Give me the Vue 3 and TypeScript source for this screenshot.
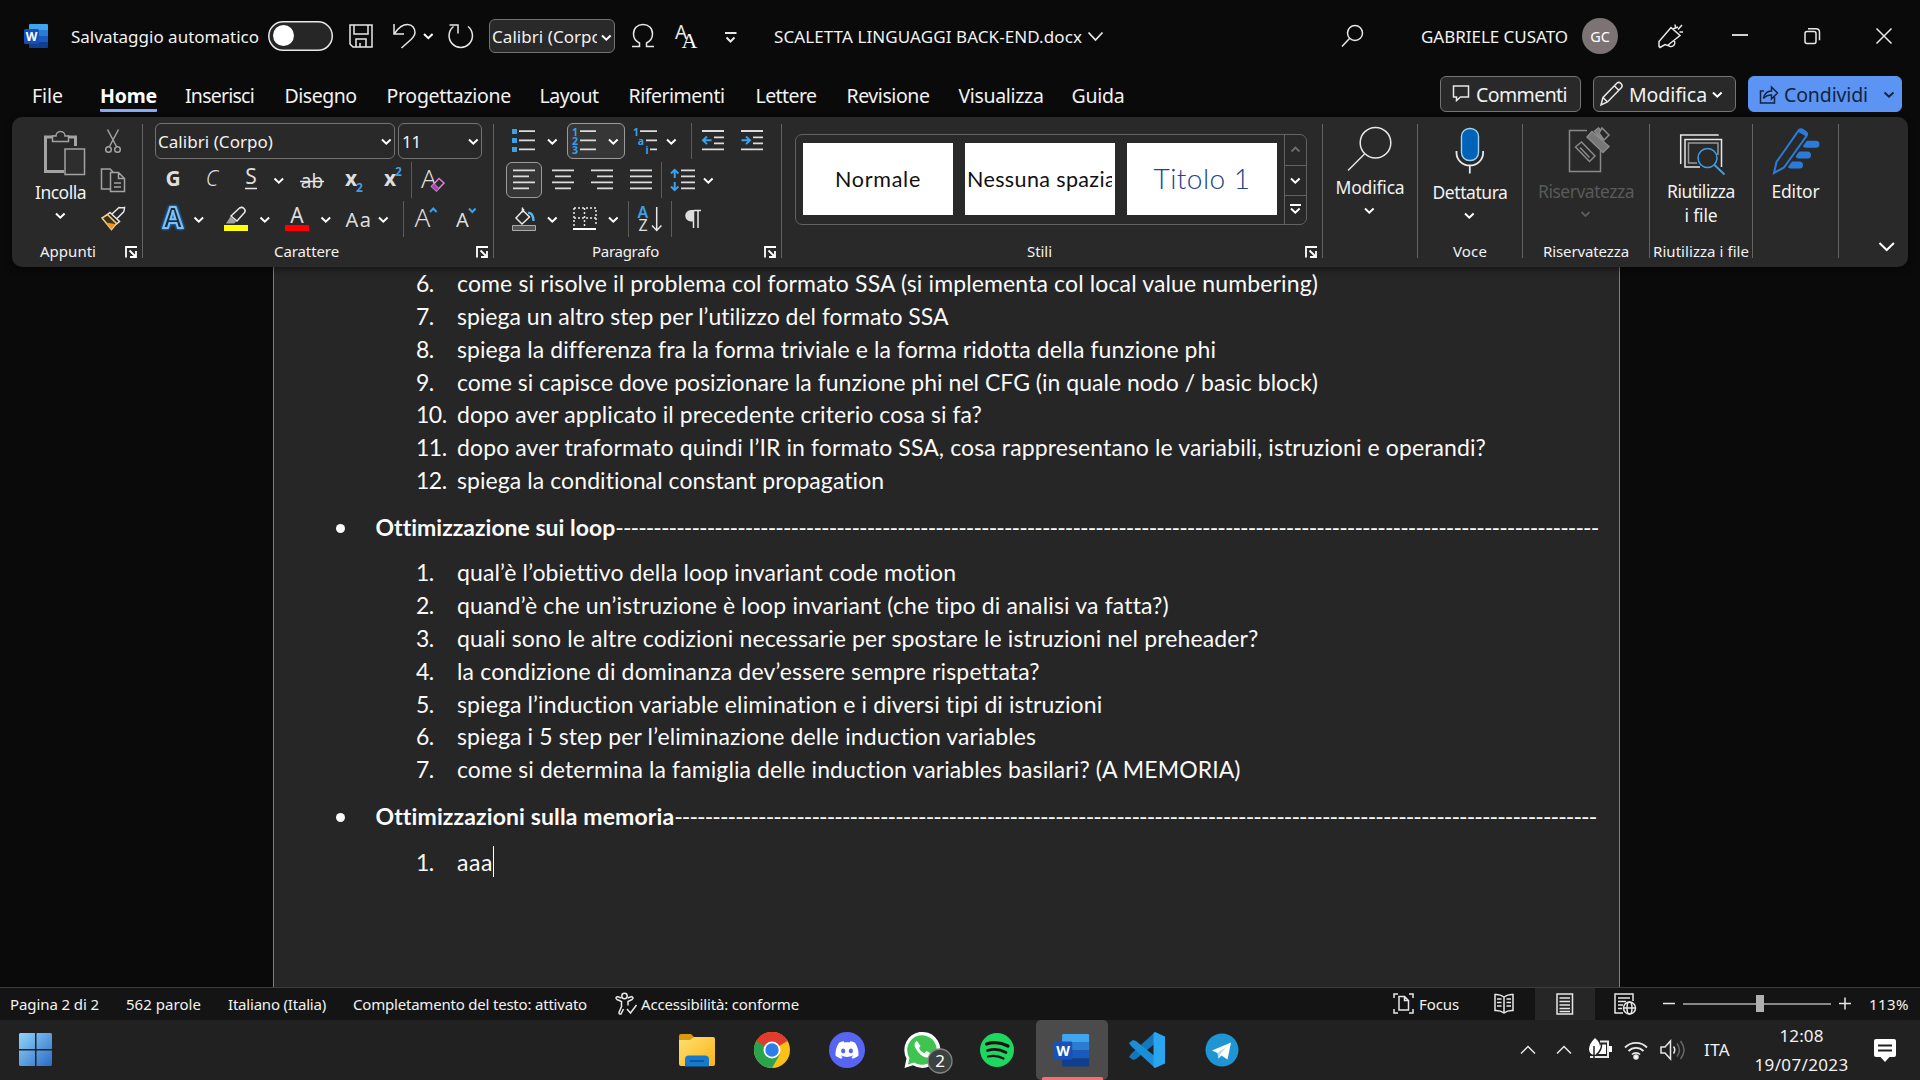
<script setup lang="ts">
import { h, type FunctionalComponent, type Directive } from 'vue'

interface Tab { label: string; width: number; cell: number; active?: boolean }
interface Line { n: number; text: string; width: number }

// Svg tile whose box is given as "x y width height" in window coordinates.
const Ic: FunctionalComponent<{ b: string }> = (props, { slots }) => {
  const [, , w, ht] = props.b.split(' ')
  return h('svg', { class: 'ic', width: w, height: ht, viewBox: props.b }, slots.default?.())
}
Ic.props = ['b']

const Chev: FunctionalComponent<{ x: number | string; y: number | string }> = (props) =>
  h('path', { class: 'cv', d: `M${props.x} ${props.y}l4.3 4.2 4.3-4.2` })
Chev.props = ['x', 'y']

// Tracks the text so that its run takes the given width.
const vFit: Directive<HTMLElement, number> = {
  mounted(el, binding) {
    const count = (el.textContent ?? '').length
    const natural = el.getBoundingClientRect().width
    el.style.letterSpacing = `${(binding.value - natural) / count}px`
  },
}

const tabs: Tab[] = [
  { label: 'File', width: 31, cell: 68 },
  { label: 'Home', width: 57, cell: 85, active: true },
  { label: 'Inserisci', width: 69, cell: 99.5 },
  { label: 'Disegno', width: 72, cell: 102 },
  { label: 'Progettazione', width: 124.5, cell: 153 },
  { label: 'Layout', width: 59, cell: 89 },
  { label: 'Riferimenti', width: 96, cell: 127 },
  { label: 'Lettere', width: 61, cell: 91 },
  { label: 'Revisione', width: 83, cell: 112 },
  { label: 'Visualizza', width: 85, cell: 113 },
  { label: 'Guida', width: 53, cell: 60 },
]

const first: Line[] = [
  { n: 6, text: 'come si risolve il problema col formato SSA (si implementa col local value numbering)', width: 861 },
  { n: 7, text: 'spiega un altro step per l’utilizzo del formato SSA', width: 492 },
  { n: 8, text: 'spiega la differenza fra la forma triviale e la forma ridotta della funzione phi', width: 757.5 },
  { n: 9, text: 'come si capisce dove posizionare la funzione phi nel CFG (in quale nodo / basic block)', width: 861 },
  { n: 10, text: 'dopo aver applicato il precedente criterio cosa si fa?', width: 525 },
  { n: 11, text: 'dopo aver traformato quindi l’IR in formato SSA, cosa rappresentano le variabili, istruzioni e operandi?', width: 1029 },
  { n: 12, text: 'spiega la conditional constant propagation', width: 428 },
]
const second: Line[] = [
  { n: 1, text: 'qual’è l’obiettivo della loop invariant code motion', width: 499 },
  { n: 2, text: 'quand’è che un’istruzione è loop invariant (che tipo di analisi va fatta?)', width: 711.5 },
  { n: 3, text: 'quali sono le altre codizioni necessarie per spostare le istruzioni nel preheader?', width: 801.5 },
  { n: 4, text: 'la condizione di dominanza dev’essere sempre rispettata?', width: 582 },
  { n: 5, text: 'spiega l’induction variable elimination e i diversi tipi di istruzioni', width: 646.5 },
  { n: 6, text: 'spiega i 5 step per l’eliminazione delle induction variables', width: 579.5 },
  { n: 7, text: 'come si determina la famiglia delle induction variables basilari? (A MEMORIA)', width: 784 },
]
const dashes = (n: number): string => '-'.repeat(n)
</script>

<template>
  <div class="app">
    <header class="title">
      <Ic b="0 0 71 72">
        <g transform="translate(24 24)">
          <path d="M5 1q0-1 1-1h17q1 0 1 1v5H5z" fill="#41a5ee" stroke="none" />
          <path d="M5 6h19v6H5z" fill="#2b7cd3" stroke="none" />
          <path d="M5 12h19v6H5z" fill="#185abd" stroke="none" />
          <path d="M5 18h19v5q0 1-1 1H6q-1 0-1-1z" fill="#103f91" stroke="none" />
          <rect x="0" y="5" width="15" height="15" rx="1.5" fill="#1450b8" stroke="none" />
          <text x="7.5" y="16.5" class="wl">W</text>
        </g>
      </Ic>
      <span v-fit="188">Salvataggio automatico</span>
      <Ic b="259 0 82 72">
        <rect x="268.8" y="21.8" width="63.5" height="28.5" rx="14.2" fill="#262626" />
        <circle cx="283.5" cy="35.5" r="10.5" fill="#fff" stroke="none" />
      </Ic>
      <Ic b="341 0 40 72"><path d="M350 25h22v22h-19l-3-3zM354 25v9h14v-9M356 47v-8h10v8M360 47v-4" /></Ic>
      <Ic b="381 0 60 72">
        <path d="M394 24v10h10M394.500 33.500c4-6 8-9 13-9 5 0 7.500 4 7.500 8 0 3-2 5-4 7L401.500 48" />
        <Chev x="424" y="34" />
      </Ic>
      <Ic b="441 0 48 72"><path d="M453.500 26.500a11.700 11.700 0 1 0 14.500 0M449.500 25h8.500v8.500" /></Ic>
      <div class="combo qfont"><span class="qtext">Calibri (Corpo)</span><Ic b="597 18 16 33"><Chev x="602" y="33.500" /></Ic></div>
      <Ic b="615 0 49 72"><path d="M632 46.500h7.500v-3.500c-4-2-6-5-6-9 0-6 4-9.500 9.500-9.500s9.500 3.500 9.500 9.500c0 4-2 7-6 9v3.500h7.500" /></Ic>
      <Ic b="664 0 46 72">
        <text x="675" y="39" class="a1">A</text><text x="681.500" y="48" class="a2">A</text>
      </Ic>
      <Ic b="710 0 64 72"><path d="M725 33h11.500M726.500 37.500l4 4 4-4" stroke-width="2" /></Ic>
      <span v-fit="308">SCALETTA LINGUAGGI BACK-END.docx</span>
      <Ic b="1082 0 246 72"><path d="M1088.500 32.500l7 7.500 7-7.500" stroke-width="1.800" /></Ic>
      <Ic b="1328 0 93 72"><circle cx="1355" cy="33" r="7.500" /><path d="M1349.500 38.500l-7.500 8" /></Ic>
      <span v-fit="147">GABRIELE CUSATO</span>
      <Ic b="1568 0 64 72">
        <circle cx="1600" cy="36" r="18" fill="#7c7474" stroke="none" /><text x="1600" y="41.500" class="gc">GC</text>
      </Ic>
      <Ic b="1632 0 64 72"><path d="M1671 27.500l9 8-12.500 10-2.500-1-5 3-1-1v-5zM1668 45a3.500 3.500 0 0 0 6-4.500M1673 29l5-2M1675 24.500l.5 3M1682 25l-4 4.500M1679.500 32h3.500" /></Ic>
      <Ic b="1696 0 72 72"><path d="M1732 35h16" stroke-width="1.800" /></Ic>
      <Ic b="1768 0 80 72"><rect x="1805" y="31.500" width="11" height="12" rx="2" /><path d="M1808 28.800h8q3.500 0 3.500 3.500v8" /></Ic>
      <Ic b="1848 0 72 72"><path d="M1876.500 28.500l15 15M1891.500 28.500l-15 15" /></Ic>
    </header>

    <nav class="tabs">
      <div v-for="t in tabs" :key="t.label" :style="{ width: t.cell + 'px' }">
        <span v-fit="t.width" class="tab" :class="{ on: t.active }">{{ t.label }}</span>
      </div>
      <div class="acts">
        <div class="btn comm">
          <Ic b="1452 85 24 20"><path d="M1453.500 87h15v11h-8l-4 3.500v-3.500h-3z" /></Ic><span v-fit="91">Commenti</span>
        </div>
        <div class="btn modi">
          <Ic b="1599 80 29 28"><path d="M1600 105l2-7.500 14-14.500q2-1.500 4 .5t.5 4L1606.500 102zM1602 97.500l4.500 4.500M1613.500 86l4.500 4.500" /></Ic>
          <span v-fit="78">Modifica</span>
          <Ic b="1706 80 20 28"><Chev x="1712" y="92.500" /></Ic>
        </div>
        <div class="btn shar">
          <Ic b="1760 80 24 28"><path class="dk" d="M1764 91h-3.500v12h14v-6M1763.500 98.500c1-5 4-7.500 8-7.500v-4l6 6-6 6v-4c-3.500 0-6 1-8 3.500z" /></Ic>
          <span v-fit="84">Condividi</span>
          <Ic b="1868 80 33 28"><path class="dk" d="M1884.500 92.500l4.500 4.200 4.500-4.200" stroke-width="2" /></Ic>
        </div>
      </div>
    </nav>

    <section class="ribbon">
      <div class="grp appunti">
        <div class="body cols">
          <div class="col paste">
            <Ic b="28 123 60 57">
              <path class="gr" d="M56 137H45.500v34.500H64M67 137h8.500v9" stroke-width="3" />
              <path class="gr" d="M52.500 141.500v-5.500h3.500c0-2 1.500-4.500 4.500-4.500s4.500 2.500 4.500 4.500h3.500v5.500z" fill="#292929" />
              <rect class="gr" x="65" y="149" width="19.500" height="25.500" fill="#2e2e2e" />
            </Ic>
            <span v-fit="51" class="big">Incolla</span>
            <Ic b="28 206 60 18"><Chev x="56" y="213.500" /></Ic>
          </div>
          <div class="col">
            <Ic b="94 123 46 39"><g class="gr"><path d="M107.500 129.500l9 17M118.500 129.500l-9 17" /><circle cx="108.500" cy="149.500" r="2.800" /><circle cx="117.500" cy="149.500" r="2.800" /></g></Ic>
            <Ic b="94 162 46 39"><path class="gr" d="M110 189h-8.500v-20h8.500l3 3M110.500 172.500h8l6 6v13h-14zM118.500 172.500v6h6M114 183h7M114 187h7" /></Ic>
            <Ic b="94 201 46 36">
              <path d="M112 214l7-6.500q3 .500 5.500 0 0 3-1 4.500l-6.500 6.500" />
              <path d="M110 212.500l9.500 9-3 2.500-9.500-9z" />
              <path d="M107.500 214.500l-5.500 3.500 9.500 11.500 5-6z" fill="#3a3322" stroke="#f3d27c" /><path d="M106 222.500l9 1.500-3.500 5z" fill="#f0932b" stroke="none" />
            </Ic>
          </div>
        </div>
        <div class="foot"><span v-fit="56">Appunti</span><Ic b="0 0 12 12"><path class="ln" d="M1 11.500V1h11M4.500 4.500l6 6M11 5v6H5" /></Ic></div>
      </div>
      <i class="sep" />
      <div class="grp carattere">
        <div class="body rows">
          <div class="row">
            <div class="combo c1"><span v-fit="115">Calibri (Corpo)</span><Ic b="374 124 20 34"><Chev x="382" y="139.500" /></Ic></div>
            <div class="combo c2"><span v-fit="19">11</span><Ic b="460 124 21 34"><Chev x="469" y="139.500" /></Ic></div>
          </div>
          <div class="row">
            <Ic b="155 162 36 36"><text x="173" y="185.500" class="l b">G</text></Ic>
            <Ic b="191 162 40 36"><text x="212" y="185.500" class="l i">C</text></Ic>
            <Ic b="231 162 58 36"><text x="251" y="184" class="l">S</text><path d="M245 188.500h12" /><Chev x="274.500" y="178.500" /></Ic>
            <Ic b="289 162 43 36"><text x="312" y="188" class="l s">ab</text><path d="M300 181.500h24" /></Ic>
            <Ic b="332 162 40 36"><text x="351" y="185.500" class="l b">x</text><text x="359.500" y="192" class="l n">2</text></Ic>
            <Ic b="372 162 39 36"><text x="390" y="185.500" class="l b">x</text><text x="398.500" y="176" class="l n">2</text></Ic>
            <i class="vs" />
            <Ic b="412 162 60 36"><text x="429" y="187.500" class="l big2">A</text><path d="M431.500 186.500l7.500-8 5 4.500-7.500 8z" fill="#292929" stroke="#d982dc" /><path d="M434 184l4.500 4.500" stroke="#d982dc" /><path d="M431.500 186.500l2.500-2.500 4.500 4.500-2 2.500z" fill="#a445ab" stroke="none" /></Ic>
          </div>
          <div class="row">
            <Ic b="155 201 54 36"><text x="173" y="228" class="l glow">A</text><Chev x="194.500" y="217.500" /></Ic>
            <Ic b="209 201 68 36"><path d="M231 216l8.500-8q2.500-1.500 4.500.500t.500 4L237 221z" /><path d="M226 223.500l4.500-7 6 5-2.500 2z" fill="#a0a0a0" stroke="none" /><path d="M224 225h24v6h-24z" fill="#ff0" stroke="none" /><Chev x="260.500" y="217.500" /></Ic>
            <Ic b="277 201 61 36"><text x="297" y="223" class="l">A</text><path d="M285 225h24v6h-24z" fill="#f00" stroke="none" /><Chev x="321.500" y="217.500" /></Ic>
            <Ic b="338 201 65 36"><text x="359" y="226.500" class="l aa">Aa</text><Chev x="379" y="217.500" /></Ic>
            <i class="vs" />
            <Ic b="404 201 42 36"><text x="422.500" y="226.500" class="l big2">A</text><path class="bl" d="M430 212l3.300-3.500 3.300 3.500" /></Ic>
            <Ic b="446 201 40 36"><text x="462.500" y="226.500" class="l sm">A</text><path class="bl" d="M469 208.500l3.300 3.500 3.300-3.500" /></Ic>
          </div>
        </div>
        <div class="foot"><span v-fit="65">Carattere</span><Ic b="0 0 12 12"><path class="ln" d="M1 11.500V1h11M4.500 4.500l6 6M11 5v6H5" /></Ic></div>
      </div>
      <i class="sep" />
      <div class="grp paragrafo">
        <div class="body rows">
          <div class="row">
            <Ic b="506 123 61 36"><path class="bf" d="M512 129h5v5h-5zM512 138h5v5h-5zM512 147h5v5h-5z" /><path class="th" d="M519 131.200h16M519 140.400h16M519 149.400h16" /><Chev x="548" y="139.500" /></Ic>
            <div class="sel"><Ic b="568 124 56 34"><text x="575" y="135.500" class="n9">1</text><text x="575" y="144.500" class="n9">2</text><text x="575" y="153.500" class="n9">3</text><path class="th" d="M580 131.200h16M580 140.400h16M580 149.400h16" /><Chev x="609" y="139.500" /></Ic></div>
            <Ic b="625 123 66 36"><text x="636" y="136" class="n9">1</text><text x="641" y="145" class="n9">a</text><text x="647" y="154" class="n9">i</text><path class="th" d="M640 131.200h17M646 140.400h11M650 149.400h7" /><Chev x="667" y="139.500" /></Ic>
            <i class="vs" />
            <Ic b="692 123 40 36"><path class="th" d="M702 131h22M714 137.300h10M714 143.300h10M702 149.400h22" /><path class="bl" d="M711.500 140.300h-8M707 136.500l-4 3.800 4 3.800" /></Ic>
            <Ic b="732 123 40 36"><path class="th" d="M741 131h22M753 137.300h10M753 143.300h10M741 149.400h22" /><path class="bl" d="M741.500 140.300h8M746 136.500l4 3.800-4 3.800" /></Ic>
          </div>
          <div class="row">
            <div class="sel"><Ic b="507 163 34 34"><path class="th" d="M513 170.300h22M513 176.300h16M513 182.300h22M513 188.300h16" /></Ic></div>
            <Ic b="542 162 40 36"><path class="th" d="M552 170.300h22M555 176.300h16M552 182.300h22M555 188.300h16" /></Ic>
            <Ic b="582 162 40 36"><path class="th" d="M591 170.300h22M597 176.300h16M591 182.300h22M597 188.300h16" /></Ic>
            <Ic b="622 162 39 36"><path class="th" d="M630 170.300h22M630 176.300h22M630 182.300h22M630 188.300h22" /></Ic>
            <i class="vs" />
            <Ic b="663 162 60 36"><path class="th" d="M682 170.300h14M682 176.300h14M682 182.300h14M682 188.300h14" /><path class="bl" d="M675.700 170v8M672 173.500l3.700-3.500 3.700 3.500M675.700 182v8M672 186.500l3.700 3.500 3.700-3.500" /><Chev x="705" y="178.500" /></Ic>
          </div>
          <div class="row">
            <Ic b="506 201 61 36"><path d="M522.500 207.500v5M522.500 210l7 7-7.500 7-6-6 8-8.500z" /><path d="M528 213q5-1 5.500 8" stroke="#5fb0e8" stroke-width="2.500" /><path d="M512.500 225.500h23v5h-23z" fill="#555" stroke="#aaa" stroke-width="1" /><Chev x="548" y="217.500" /></Ic>
            <Ic b="567 201 61 36"><path d="M574 208h22v18M574 208v18M574 218h22M584.500 208v18" stroke-dasharray="2 2" /><path d="M573 229h23" stroke="#fff" stroke-width="2" /><Chev x="609" y="217.500" /></Ic>
            <i class="vs" />
            <Ic b="629 201 42 36"><text x="643" y="218" class="az t">A</text><text x="643" y="231" class="az">Z</text><path d="M656.700 207v23M652 225.500l4.700 5 4.700-5" /></Ic>
            <i class="vs" />
            <Ic b="672 201 50 36"><path d="M694 210.500h7M693.500 211v17M698 211v17" /><path d="M694 210h-3a5.500 5.500 0 0 0 0 11.500h3z" fill="#ddd" stroke="none" /></Ic>
          </div>
        </div>
        <div class="foot"><span v-fit="67">Paragrafo</span><Ic b="0 0 12 12"><path class="ln" d="M1 11.500V1h11M4.500 4.500l6 6M11 5v6H5" /></Ic></div>
      </div>
      <i class="sep" />
      <div class="grp stili">
        <div class="body">
          <div class="gallery">
            <div class="card"><span v-fit="86">Normale</span></div>
            <div class="card wide"><span v-fit="157">Nessuna spaziat</span></div>
            <div class="card h1"><span v-fit="97">Titolo 1</span></div>
            <div class="spin">
              <Ic b="1285 135 21 30"><path d="M1291.500 151.500l4-4 4 4" stroke="#6d6d6d" stroke-width="1.800" /></Ic>
              <Ic b="1285 166 21 29"><Chev x="1291" y="178.500" /></Ic>
              <Ic b="1285 196 21 28"><path d="M1290 205h11" stroke="#fff" stroke-width="2" /><Chev x="1291" y="208.500" /></Ic>
            </div>
          </div>
        </div>
        <div class="foot"><span v-fit="25">Stili</span><Ic b="0 0 12 12"><path class="ln" d="M1 11.500V1h11M4.500 4.500l6 6M11 5v6H5" /></Ic></div>
      </div>
      <i class="sep" />
      <div class="grp g-mod">
        <Ic b="1323 117 94 58"><circle cx="1375.500" cy="142.700" r="15.300" /><path d="M1364.500 154L1348 170.500" /></Ic>
        <span v-fit="69" class="big">Modifica</span>
        <Ic b="1323 201 94 24"><Chev x="1365" y="208.500" /></Ic>
      </div>
      <i class="sep" />
      <div class="grp g-voc">
        <Ic b="1418 117 104 63"><path d="M1456.500 151v2a13.300 12.500 0 0 0 26.600 0v-2M1469.800 165.500v8" stroke-width="1.800" /><rect x="1461.500" y="128.500" width="17" height="32" rx="8" fill="#0063b8" stroke="#9fd0f2" stroke-width="1.400" /></Ic>
        <span v-fit="75" class="big">Dettatura</span>
        <Ic b="1418 206 104 32"><Chev x="1465" y="213.500" /></Ic>
        <div class="foot"><span v-fit="34">Voce</span></div>
      </div>
      <i class="sep" />
      <div class="grp g-ris">
        <Ic b="1523 117 126 61">
          <g stroke="#8a8a8a"><path d="M1587 130.500h-17.500v41h31v-21" /><path d="M1575.500 147l6-5 13.500 14-5.500 5.500zM1580 147.500l9.500 10" /><path d="M1587 137l5-5.500 17 15-6 6zM1594.500 131l4-3 8 8-4 4z" fill="#777" /><path d="M1599 133l3-5 7 7-5 5z" fill="#292929" /></g>
        </Ic>
        <span v-fit="96" class="big off">Riservatezza</span>
        <Ic b="1523 204 126 34"><path d="M1581.500 212l4 4 4-4" stroke="#5c5c5c" stroke-width="1.800" /></Ic>
        <div class="foot"><span v-fit="86">Riservatezza</span></div>
      </div>
      <i class="sep" />
      <div class="grp g-riu">
        <Ic b="1650 117 102 61">
          <path d="M1680.700 164v-29h38" /><path d="M1700 167h-15v-27.500h36.500v27.500" /><path d="M1697 163h-8.500v-20h29.500v12" stroke="#999" />
          <circle cx="1707.500" cy="158" r="9.500" fill="#292929" stroke="#3d9fe6" /><path d="M1714.500 165l10 9.500" stroke="#3d9fe6" stroke-width="2" />
        </Ic>
        <span v-fit="68" class="big">Riutilizza</span>
        <span v-fit="33" class="big two">i file</span>
        <div class="foot"><span v-fit="96">Riutilizza i file</span></div>
      </div>
      <i class="sep" />
      <div class="grp g-edi">
        <Ic b="1753 117 85 61">
          <path d="M1806 144.300h10M1799 155h8.500M1791 165h8.500" stroke="#2b7cd9" stroke-width="7" stroke-linecap="round" />
          <path d="M1774 173l2.500-11 22.500-32q1.500-1.500 3.500 0l3.500 2.500q2 1.500.5 3.500l-22.500 31.500z" fill="#292929" stroke="#292929" stroke-width="6" />
          <path d="M1774 173l2.500-11 22.500-32q1.500-1.500 3.500 0l3.500 2.500q2 1.500.5 3.500l-22.500 31.500z" fill="#292929" stroke="#2b7cd9" stroke-width="2" />
          <path d="M1799 130l3.500-1.500 5 3.500-.5 5-8.500-5z" fill="#2b7cd9" stroke="none" />
        </Ic>
        <span v-fit="48" class="big">Editor</span>
      </div>
      <i class="sep" />
      <div class="grp g-end"><Ic b="1839 117 69 148"><path d="M1879.500 243l7.200 7 7.200-7" stroke-width="2" stroke="#fff" /></Ic></div>
    </section>

    <main class="canvas">
      <article class="page">
        <div v-for="l in first" :key="l.n" class="line"><span class="num">{{ l.n }}.</span><span v-fit="l.width">{{ l.text }}</span></div>
        <div class="line head"><i class="dot" /><b v-fit="239">Ottimizzazione sui loop</b><span v-fit="983">{{ dashes(129) }}</span></div>
        <div v-for="l in second" :key="l.n" class="line"><span class="num">{{ l.n }}.</span><span v-fit="l.width">{{ l.text }}</span></div>
        <div class="line head"><i class="dot" /><b v-fit="298">Ottimizzazioni sulla memoria</b><span v-fit="922">{{ dashes(121) }}</span></div>
        <div class="line last"><span class="num">1.</span><span v-fit="36">aaa</span><i class="caret" /></div>
      </article>
    </main>

    <footer class="status">
      <div class="stat"><span v-fit="89">Pagina 2 di 2</span><span v-fit="75">562 parole</span><span v-fit="98">Italiano (Italia)</span><span v-fit="234">Completamento del testo: attivato</span></div>
      <Ic b="588 988 53 32"><circle cx="624.500" cy="996" r="2.700" /><path d="M617 996.500q-2 1.500 0 3l4.500 2v5l-2.500 6q0 2 2 1.500l2.500-5M632 996.500q2 1.500 0 3l-4 2v4M617 996.500l4.500 1.500M632 996.500l-4.500 1.500M627 1009l3.500 4 6-8" /></Ic>
      <span v-fit="158">Accessibilità: conforme</span>
      <div class="sp" />
      <Ic b="1388 988 31 32"><path d="M1398 994h-4v4M1409 994h4v4M1398 1013h-4v-4M1409 1013h4v-4M1399 996.500h5.500l4 4v9.500h-9.500zM1404.500 996.500v4h4" /></Ic>
      <span v-fit="40">Focus</span>
      <Ic b="1459 988 76 32"><path d="M1504 997q-4-3-9-2.500v16q5-.500 9 2.500 4-3 9-2.500v-16q-5-.500-9 2.500zM1504 997v16M1497 999h4.500M1497 1002.500h4.500M1497 1006h4.500M1506.500 999h4.500M1506.500 1002.500h4.500M1506.500 1006h4.500" /></Ic>
      <div class="view"><Ic b="1535 988 60 32"><path d="M1557 994h15.500v20H1557zM1559.500 998h10.500M1559.500 1001.500h10.500M1559.500 1005h10.500M1559.500 1008.500h10.500M1559.500 1011.500h10.500" /></Ic></div>
      <Ic b="1595 988 60 32"><path d="M1623 1013h-8V994h18v7M1618 998h12M1618 1001.500h8M1618 1005h5M1618 1008.500h4" /><circle cx="1629.500" cy="1008" r="6" /><ellipse cx="1629.500" cy="1008" rx="2.500" ry="6" /><path d="M1623.500 1008h12" /></Ic>
      <Ic b="1655 988 214 32"><path d="M1663 1003.500h12M1839 1003.500h12M1845 997.500v12" /><path d="M1683 1004h148" stroke="#b0b0b0" /><path d="M1756 995h8v17h-8z" fill="#b0b0b0" stroke="none" /></Ic>
      <span v-fit="40">113%</span>
    </footer>

    <footer class="task">
      <Ic b="0 1020 660 60">
        <defs><linearGradient id="win" x1="0" y1="0" x2="1" y2="1"><stop offset="0" stop-color="#8fd6f8" /><stop offset="1" stop-color="#2a6bc8" /></linearGradient></defs>
        <path d="M20 1033h15v16H19v-15zM36.500 1033H51l1 1v15H36.500zM19 1050.500h16v15.500H20l-1-1zM36.500 1050.500H52v14.500l-1 1H36.500z" fill="url(#win)" stroke="none" />
      </Ic>
      <Ic b="660 1020 75 60">
        <defs><linearGradient id="fold" x1="0" y1="0" x2="1" y2="1"><stop offset="0" stop-color="#ffdf70" /><stop offset="1" stop-color="#f8b518" /></linearGradient></defs>
        <g stroke="none"><path d="M679 1036q0-2 2-2h10l4 4-2 4h-14z" fill="#d99a10" /><path d="M679 1040h11l4-3h19q2 0 2 2v25q0 2-2 2h-32q-2 0-2-2z" fill="url(#fold)" /><path d="M685 1066.500v-7q0-4 4-4h16q4 0 4 4v7z" fill="#1579cf" /></g><path d="M690 1061h14" stroke="#0b4f91" />
      </Ic>
      <Ic b="735 1020 75 60">
        <g stroke="none"><circle cx="772" cy="1050" r="18" fill="#fbc116" /><path d="M772 1050L756.400 1041A18 18 0 0 1 787.600 1041z" fill="#e33b2e" /><path d="M772 1041h15.600A18 18 0 0 0 756.400 1041L764 1054z" fill="#e33b2e" /><path d="M756.400 1041A18 18 0 0 0 772 1068l7.800-13.500L772 1050z" fill="#2ba24c" /><circle cx="772" cy="1050" r="8.500" fill="#fff" /><circle cx="772" cy="1050" r="6.700" fill="#2f7de9" /></g>
      </Ic>
      <Ic b="810 1020 75 60"><circle cx="847" cy="1050" r="18" fill="#5865f2" stroke="none" /><path transform="translate(835.500 1038.500) scale(.96)" fill="#fff" stroke="none" d="M20.317 4.370a19.800 19.800 0 0 0-4.885-1.515c-.250.380-.520.900-.690 1.286-1.845-.276-3.680-.276-5.487 0-.160-.390-.400-.870-.700-1.286a19.700 19.700 0 0 0-4.885 1.515C.530 9.046-.320 13.580.100 18.058c2.050 1.507 4.040 2.422 6.020 3.085.500-.630.950-1.320 1.310-2.021-.650-.250-1.310-.580-1.921-1.020l.450-.297c3.928 1.793 8.180 1.793 12.061 0l.450.300c-.600.440-1.260.770-1.920 1.020.360.700.810 1.390 1.310 2.020 1.960-.607 3.950-1.522 6.033-3.084.500-5.177-.838-9.674-3.548-13.690zM8.020 15.331c-1.183 0-2.157-1.086-2.157-2.419s.956-2.419 2.157-2.419c1.211 0 2.176 1.095 2.157 2.419 0 1.333-.956 2.419-2.157 2.419zm7.975 0c-1.183 0-2.157-1.086-2.157-2.419s.955-2.419 2.157-2.419c1.211 0 2.176 1.095 2.157 2.419 0 1.333-.946 2.419-2.157 2.419z" /></Ic>
      <Ic b="885 1020 75 60">
        <path d="M904.500 1068l2-9.500a18 18 0 1 1 6.500 6.800z" fill="#fff" stroke="none" /><path d="M908 1064.500l1.500-6.500a14.800 14.800 0 1 1 4.500 4.500z" fill="#3fc351" stroke="none" />
        <path d="M917 1041c-3 1-3 5-1 8 2.500 4.500 6 7.500 10 8.500 2.500.500 5-1 5-4l-4.500-2.500-2 2.300c-2.500-1-4.500-3-5.500-5.300l1.500-2z" fill="#fff" stroke="none" />
        <circle cx="940" cy="1061" r="12" fill="#3c4240" stroke="#858585" stroke-width="1.300" /><text x="940" y="1067" class="badge">2</text>
      </Ic>
      <Ic b="960 1020 76 60"><circle cx="997" cy="1050" r="17" fill="#1ed760" stroke="none" /><g stroke="#191414" stroke-linecap="round"><path d="M986.500 1044q11-3.500 21.500 2" stroke-width="3.200" /><path d="M987.500 1050.500q9.500-3 18.500 2" stroke-width="2.600" /><path d="M988 1056.500q8.500-2 15.500 2" stroke-width="2.200" /></g></Ic>
      <div class="active"><Ic b="1036 1020 72 60">
        <g transform="translate(1054 1034) scale(1.350)"><g stroke="none"><path d="M6 1q0-1 1-1h18q1 0 1 1v5H6z" fill="#41a5ee" /><path d="M6 6h20v6H6z" fill="#2b7cd3" /><path d="M6 12h20v6H6z" fill="#185abd" /><path d="M6 18h20v5q0 1-1 1H7q-1 0-1-1z" fill="#103f91" /><rect y="5.500" width="13.500" height="13.500" rx="1" fill="#1652ba" /></g><text x="6.700" y="16" class="wl ws">W</text></g>
        <rect x="1042" y="1077" width="61" height="5" rx="1.500" fill="#f4706b" stroke="none" />
      </Ic></div>
      <Ic b="1108 1020 77 60"><g stroke="none"><path d="M1155 1032l-24 22-2 3 4 3 3-1 21-17z" fill="#1377b8" /><path d="M1155 1068l-24-22-2-3 4-3 3 1 21 17z" fill="#1b8fd6" /><path d="M1155 1032l10 4.500v27l-10 4.500q-1.500-.5-1.500-2v-32q0-1.500 1.500-2z" fill="#2aa6f0" /></g></Ic>
      <Ic b="1185 1020 320 60"><circle cx="1222" cy="1050" r="16.500" fill="#1f95d3" stroke="none" /><path d="M1212 1050.500l19-8-3.500 17-6-4-3 3-1-5.500z" fill="#fff" stroke="none" /><path d="M1217.500 1053l9-6.500-6.500 8-1.500 3.500z" fill="#b5d7ea" stroke="none" /></Ic>
      <div class="sp" />
      <Ic b="1505 1020 38 60"><path d="M1521 1053.500l7-7 7 7" /></Ic>
      <Ic b="1543 1020 37 60"><path d="M1557 1053.500l7-7 7 7" /></Ic>
      <Ic b="1580 1020 38 60"><path d="M1600 1041.500h8v15.500h-18" stroke-width="2" /><path d="M1609 1046h3v6h-3zM1600.500 1044.500h5.500v9.500h-9z" fill="#fff" stroke="none" /><path d="M1595 1038q6 5 5 11-1 5-6 6-5-1-5-6t6-11z" fill="#fff" stroke="none" /><path d="M1594 1046v12M1601.500 1044q.5 6-5 10.500" stroke="#222" /></Ic>
      <Ic b="1618 1020 36 60"><path d="M1625 1047.500a15.500 15.500 0 0 1 22 0M1628.500 1051a10.500 10.500 0 0 1 15 0M1632 1054.500a5.500 5.500 0 0 1 8 0" stroke-width="1.800" /><circle cx="1636" cy="1057" r="2" fill="#fff" /></Ic>
      <Ic b="1654 1020 50 60"><path d="M1661 1047h4l5.500-6v18l-5.500-6h-4zM1673.500 1046.500q2.500 3.500 0 7" /><path d="M1677 1043.500q5 6.500 0 13M1680.500 1041q7 9 0 18" stroke="#666" /></Ic>
      <span v-fit="26" class="lang">ITA</span>
      <div class="clock"><span v-fit="44">12:08</span><span v-fit="94">19/07/2023</span></div>
      <Ic b="1849 1020 71 60"><path d="M1876 1039h18q2 0 2 2v14q0 2-2 2h-4.500l-4.500 5-4.500-5h-4.500q-2 0-2-2v-14q0-2 2-2z" fill="#fff" stroke="none" /><path d="M1878 1045.500h14M1878 1050.500h14" stroke="#222" stroke-width="1.800" /></Ic>
    </footer>
  </div>
</template>

<style>
html, body { margin: 0; background: #0a0a0a; overflow: hidden; }
</style>

<style scoped>
.app { width: 1920px; height: 1080px; overflow: hidden; background: #0a0a0a; color: #f2f2f2; font: 17px/24px "Noto Sans", "Open Sans", sans-serif; display: flex; flex-direction: column; white-space: nowrap; }
.app span, .app b { display: inline-block; flex: none; }
.ic { display: block; flex: none; fill: none; stroke: #e8e8e8; stroke-width: 1.5; overflow: visible; }
.ic text { stroke: none; fill: #e8e8e8; font-family: "Noto Sans", "Open Sans", sans-serif; text-anchor: middle; }
.cv { stroke: #fff; stroke-width: 2; }
.gr { stroke: #a3a3a3; }
.dk { stroke: #14233f; }
.th { stroke: #dcdcdc; stroke-width: 1.8; }
.bl { stroke: #3d9fe6; stroke-width: 2; }
.bf { fill: #3d9fe6; stroke: none; }
.ln { stroke: #fff; stroke-width: 1.8; }
.title { height: 72px; display: flex; align-items: center; }
.title > span { padding-top: 1px; }
.ic .wl { font-size: 12px; font-weight: 700; fill: #fff; }
.ic .ws { font-size: 10.500px; }
.ic .a1 { font-size: 19px; text-anchor: start; }
.ic .a2 { font: 22px "Liberation Serif", serif; text-anchor: start; fill: #fff; }
.ic .gc { font-size: 14.500px; fill: #fff; }
.combo { box-sizing: border-box; border: 1px solid #737373; border-radius: 6px; background: #292929; display: flex; align-items: center; flex: none; height: 36px; }
.combo > span { padding-top: 1px; }
.qfont { width: 126px; height: 34px; padding-left: 2px; }
.qtext { width: 105px; overflow: hidden; letter-spacing: .05px; }
.c1 { width: 240px; padding-left: 2px; margin-right: 3px; justify-content: space-between; }
.c2 { width: 84px; padding-left: 3px; justify-content: space-between; }
.tabs { height: 45px; display: flex; padding-left: 32px; font-size: 19.500px; box-sizing: border-box; }
.tab { box-sizing: border-box; height: 32px; line-height: 31px; margin-top: 8px; }
.tab.on { font-weight: 700; border-bottom: 3px solid #86abf4; border-radius: 1px; color: #fff; }
.acts { margin: 4px 18px 0 auto; display: flex; gap: 12px; }
.btn { box-sizing: border-box; height: 36px; border: 1px solid #757575; border-radius: 6px; background: #292929; display: flex; align-items: center; }
.btn > span { padding-top: 1px; }
.comm { width: 141px; padding-left: 11px; }
.modi { width: 143px; padding-left: 6px; }
.shar { width: 154px; padding-left: 11px; background: #5b94f2; border-color: #5b94f2; color: #14233f; }
.ribbon { height: 150px; margin: 0 12px; flex: none; background: #292929; border-radius: 10px; display: flex; position: relative; z-index: 1; box-shadow: 0 2px 6px rgba(0, 0, 0, .5); overflow: hidden; }
.sep { width: 1px; margin: 7px 0 9px; background: #636363; flex: none; }
.vs { width: 1px; background: #5c5c5c; flex: none; }
.grp { display: flex; flex-direction: column; flex: none; }
.body { height: 121px; flex: none; }
.foot { height: 26px; display: flex; align-items: center; justify-content: space-between; font-size: 15px; padding-right: 5px; flex: none; }
.foot .ic { margin-top: 2px; }
.big { line-height: 24px; height: 26px; font-size: 17.500px; }
.appunti { width: 130px; }
.appunti .foot { padding-left: 28px; }
.cols { display: flex; padding: 6px 0 0 16px; box-sizing: border-box; }
.col { display: flex; flex: none; flex-direction: column; width: 66px; }
.paste .big { margin: 0 0 0 7px; align-self: flex-start; }
.carattere { width: 350px; }
.carattere .foot { padding-left: 131px; }
.rows { display: flex; flex-direction: column; gap: 3px; padding: 6px 0 0 12px; box-sizing: border-box; }
.row { display: flex; height: 36px; }
.ic .l { font-size: 21px; fill: #dedede; }
.ic .b { font-weight: 700; }
.ic .i { font-style: italic; font-weight: 300; }
.ic .s { font-size: 19px; }
.ic .n { font-size: 12px; font-weight: 700; fill: #3d9fe6; }
.ic .aa { font-size: 20px; letter-spacing: 1.500px; }
.ic .big2 { font-size: 26px; font-weight: 300; }
.ic .sm { font-size: 20px; }
.ic .glow { font-size: 28px; font-weight: 700; fill: #1c2b3a; stroke: #7cc0f7; stroke-width: 2; filter: drop-shadow(0 0 1px #1a74c9) drop-shadow(0 0 1px #1a74c9); }
.ic .n9 { font-size: 10.500px; font-weight: 700; fill: #3d9fe6; }
.ic .az { font-size: 16px; fill: #e0e0e0; }
.ic .t { fill: #3d9fe6; font-weight: 600; }
.sel { box-sizing: border-box; height: 36px; border: 1px solid #9b9b9b; border-radius: 6px; background: #363636; flex: none; }
.paragrafo { width: 287px; }
.paragrafo .foot { padding-left: 98px; }
.stili { width: 540px; }
.stili .foot { padding-left: 245px; }
.gallery { box-sizing: border-box; width: 512px; height: 91px; margin: 17px 0 0 13px; border: 1px solid #636363; border-radius: 7px; display: flex; padding: 8px 0 8px 7px; gap: 12px; }
.card { width: 150px; height: 72px; background: #fff; color: #111; font: 21.500px/72px Lato, "Noto Sans", sans-serif; display: flex; justify-content: center; overflow: hidden; flex: none; }
.card.wide { box-sizing: border-box; width: 150px; justify-content: flex-start; border: 0 solid #fff; border-width: 0 3px 0 2px; }
.card.h1 { color: #22418f; font-size: 28px; font-weight: 300; line-height: 70px; }
.spin { display: flex; flex-direction: column; gap: 1px; background: #636363; margin: -8px 0 -8px -5px; padding-left: 1px; width: 21px; border-radius: 0 6px 6px 0; overflow: hidden; }
.spin .ic { background: #292929; }
.g-mod { width: 94px; align-items: center; }
.g-voc { width: 104px; align-items: center; }
.g-ris { width: 126px; align-items: center; }
.g-riu { width: 102px; align-items: center; }
.g-edi { width: 85px; align-items: center; }
.g-end { width: 69px; }
.g-ris .big, .g-riu .big, .g-edi .big { line-height: 26px; }
.g-voc .foot, .g-ris .foot, .g-riu .foot { padding: 0; }
.g-riu .two { margin-top: -2px; height: 36px; }
.off { color: #5a5a5a; }
.canvas { height: 720px; flex: none; }
.page { box-sizing: border-box; width: 1347px; height: 720px; margin-left: 273px; padding: 0 0 0 142px; background: #262626; border: solid #7d7d7d; border-width: 0 1px; font: 23px/32.850px Lato, "Noto Sans", sans-serif; color: #fafafa; }
.line { display: flex; height: 32.850px; }
.num { width: 41px; letter-spacing: -.5px; }
.head { margin: 13.800px 0 12.700px -80px; }
.dot { width: 9px; height: 9px; margin: 13px 30.500px 0 0; border-radius: 50%; background: #fafafa; flex: none; }
.last { padding-top: .6px; }
.caret { width: 1px; height: 31px; margin-top: 0; background: #fff; flex: none; }
.status { box-sizing: border-box; height: 33px; flex: none; border-top: 1px solid #3d3d3d; background: #141414; display: flex; align-items: center; font-size: 15px; padding-right: 11px; }
.stat { display: flex; width: 578px; padding-left: 10px; gap: 27px; }
.sp { flex: 1; }
.view { background: #262626; }
.task { height: 60px; flex: none; background: #212121; display: flex; align-items: center; }
.active { background: #4b4b4b; border-radius: 5px; overflow: hidden; }
.ic .badge { font-size: 17px; fill: #fff; }
.lang { margin-right: 24px; }
.clock { width: 95px; margin-top: 1px; display: flex; flex-direction: column; align-items: center; line-height: 28.500px; }
</style>
